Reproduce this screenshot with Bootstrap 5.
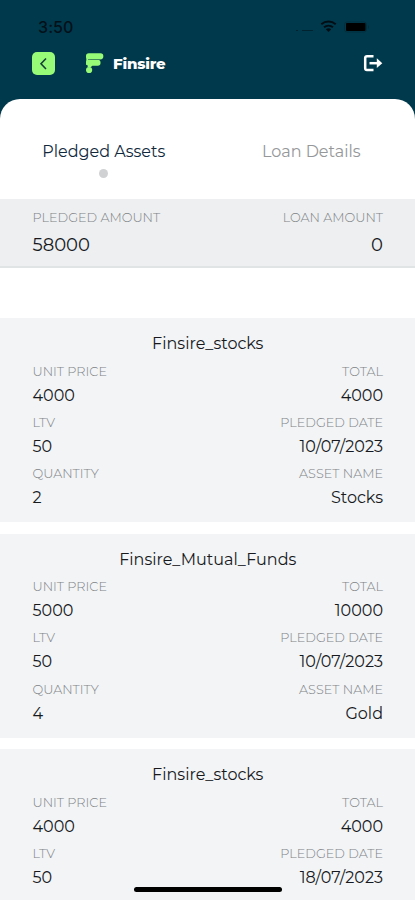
<!DOCTYPE html>
<html lang="en">
<head>
<meta charset="utf-8">
<meta name="viewport" content="width=device-width, initial-scale=1">
<title>Finsire</title>
<link href="https://cdn.jsdelivr.net/npm/bootstrap@5.3.0/dist/css/bootstrap.min.css" rel="stylesheet">
<style>
body{font-family:Montserrat,Inter,"Open Sans",sans-serif;background:#fff;color:#17191c}
.screen{height:900px;background:#00394b}
.status{height:38px;padding:17px 45px 0 38px;color:#001019}
.clock{font-family:Inter,sans-serif;font-size:16px;line-height:21px;font-weight:500;letter-spacing:.1px}
.topbar{height:61px;padding:14px 32px 0}
.back{width:23px;height:23px;border-radius:5px;background:#98fb78}
.brand{font-size:15px;line-height:24px;font-weight:800;letter-spacing:-.2px;color:#fff}
.sheet{height:801px;border-radius:20px 20px 0 0}
.tabs{height:100px;padding-top:41px}
.tab{font-size:16px;line-height:24px;color:#959799}
.tab.on{color:#10293d}
.dot{width:9px;height:9px;margin-top:5px;background:#d0d1d2}
.totals{height:69px;padding:9px 32px 0 32.5px;background:#edeff1;border-bottom:2px solid #e1e4e5;margin-bottom:50px}
.totals .val{font-size:18px;line-height:34px}
.lbl{font-size:12.8px;line-height:20px;font-weight:300;color:#808386}
.val{font-size:16px;line-height:27px}
.asset{height:204px;padding:14px 32px 0 32.5px;background:#f2f4f6;margin-bottom:11.5px}
.asset-name{font-size:16px;line-height:24px;margin-bottom:5.5px}
.pair{margin-bottom:4.3px}
.home{left:134px;bottom:8px;width:148px;height:5px;background:#000}
</style>
</head>
<body>
<div class="screen position-relative overflow-hidden">
  <div class="status d-flex justify-content-between">
    <div class="clock">3:50</div>
    <svg width="74" height="20" viewBox="0 0 74 20" fill="none">
      <path d="M0 13.5h2M6 13.5h11" stroke="#00232f" stroke-width="1"/>
      <path d="M25.3 7.3a11 11 0 0 1 14.4 0M28 10.3a7 7 0 0 1 9 0" stroke="#000d14" stroke-width="2"/>
      <path d="M29.8 12.3a4.2 4.2 0 0 1 5.4 0l-2.7 2.8z" fill="#000d14"/>
      <rect x="48.5" y="5" width="22" height="10" rx="2.5" stroke="#002e3d"/>
      <rect x="50" y="6" width="19.500" height="8" rx="1" fill="#000"/>
      <path d="M72.500 8.500v3" stroke="#002e3d"/>
    </svg>
  </div>
  <div class="topbar d-flex align-items-start">
    <div class="back d-flex align-items-center justify-content-center">
      <svg width="23" height="23" viewBox="0 0 23 23" fill="none"><path d="M14 6.5L9 11.8l5 5.2" stroke="#143f38" stroke-width="1.6"/></svg>
    </div>
    <svg class="ms-4 me-1 flex-shrink-0" width="30" height="23" viewBox="-7 0 30 23" fill="#98fb78">
      <rect x="0" y="1.200" width="17.300" height="6" rx="2.800"/>
      <rect x="0" y="7.800" width="14.500" height="6" rx="2.800"/>
      <path d="M0.300 5h4v8h-4z"/>
      <path d="M2 7.500h13" stroke="#438a59" stroke-width=".9"/>
      <path d="M2 13h4.500L5 15.200H1.500z"/>
      <circle cx="3.100" cy="18" r="3.100"/>
    </svg>
    <div class="brand">Finsire</div>
    <svg class="ms-auto" width="21" height="23" viewBox="0 0 21 23" fill="none" stroke="#fff" stroke-width="2.500">
      <path d="M11.500 4.200H5Q3.200 4.200 3.200 6v10.200Q3.200 18 5 18h6.500"/><path d="M7.500 11.200h9"/><path d="M14.800 6.300v9.800l5.500-4.900z" fill="#fff" stroke="none"/>
    </svg>
  </div>
  <div class="sheet bg-white">
    <div class="tabs row g-0 text-center">
      <div class="col-6 d-flex flex-column align-items-center"><div class="tab on">Pledged Assets</div><div class="dot rounded-circle"></div></div>
      <div class="col-6 d-flex flex-column align-items-center"><div class="tab">Loan Details</div></div>
    </div>
    <div class="totals d-flex justify-content-between">
      <div><div class="lbl">PLEDGED AMOUNT</div><div class="val">58000</div></div>
      <div class="text-end"><div class="lbl">LOAN AMOUNT</div><div class="val">0</div></div>
    </div>
    <section class="asset">
      <div class="asset-name text-center">Finsire_stocks</div>
      <div class="pair d-flex justify-content-between"><div><div class="lbl">UNIT PRICE</div><div class="val">4000</div></div><div class="text-end"><div class="lbl">TOTAL</div><div class="val">4000</div></div></div>
      <div class="pair d-flex justify-content-between"><div><div class="lbl">LTV</div><div class="val">50</div></div><div class="text-end"><div class="lbl">PLEDGED DATE</div><div class="val">10/07/2023</div></div></div>
      <div class="pair d-flex justify-content-between"><div><div class="lbl">QUANTITY</div><div class="val">2</div></div><div class="text-end"><div class="lbl">ASSET NAME</div><div class="val">Stocks</div></div></div>
    </section>
    <section class="asset">
      <div class="asset-name text-center">Finsire_Mutual_Funds</div>
      <div class="pair d-flex justify-content-between"><div><div class="lbl">UNIT PRICE</div><div class="val">5000</div></div><div class="text-end"><div class="lbl">TOTAL</div><div class="val">10000</div></div></div>
      <div class="pair d-flex justify-content-between"><div><div class="lbl">LTV</div><div class="val">50</div></div><div class="text-end"><div class="lbl">PLEDGED DATE</div><div class="val">10/07/2023</div></div></div>
      <div class="pair d-flex justify-content-between"><div><div class="lbl">QUANTITY</div><div class="val">4</div></div><div class="text-end"><div class="lbl">ASSET NAME</div><div class="val">Gold</div></div></div>
    </section>
    <section class="asset">
      <div class="asset-name text-center">Finsire_stocks</div>
      <div class="pair d-flex justify-content-between"><div><div class="lbl">UNIT PRICE</div><div class="val">4000</div></div><div class="text-end"><div class="lbl">TOTAL</div><div class="val">4000</div></div></div>
      <div class="pair d-flex justify-content-between"><div><div class="lbl">LTV</div><div class="val">50</div></div><div class="text-end"><div class="lbl">PLEDGED DATE</div><div class="val">18/07/2023</div></div></div>
      <div class="pair d-flex justify-content-between"><div><div class="lbl">QUANTITY</div></div><div class="text-end"><div class="lbl">ASSET NAME</div></div></div>
    </section>
  </div>
  <div class="home position-absolute rounded-pill"></div>
</div>
<script src="https://cdn.jsdelivr.net/npm/bootstrap@5.3.0/dist/js/bootstrap.bundle.min.js"></script>
</body>
</html>
